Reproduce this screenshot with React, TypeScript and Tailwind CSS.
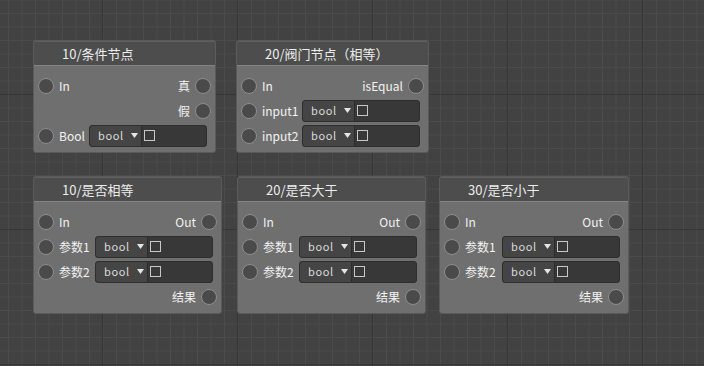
import React from "react";

type Row = { l?: string; r?: string; input?: boolean };
type NodeDef = { x: number; y: number; w: number; title: string; rows: Row[] };

const nodes: NodeDef[] = [
  { x: 33, y: 40, w: 183, title: "10/条件节点", rows: [{ l: "In", r: "真" }, { r: "假" }, { l: "Bool", input: true }] },
  { x: 236, y: 40, w: 193, title: "20/阀门节点（相等）", rows: [{ l: "In", r: "isEqual" }, { l: "input1", input: true }, { l: "input2", input: true }] },
  { x: 33, y: 176, w: 189, title: "10/是否相等", rows: [{ l: "In", r: "Out" }, { l: "参数1", input: true }, { l: "参数2", input: true }, { r: "结果" }] },
  { x: 237, y: 176, w: 189, title: "20/是否大于", rows: [{ l: "In", r: "Out" }, { l: "参数1", input: true }, { l: "参数2", input: true }, { r: "结果" }] },
  { x: 439, y: 176, w: 190, title: "30/是否小于", rows: [{ l: "In", r: "Out" }, { l: "参数1", input: true }, { l: "参数2", input: true }, { r: "结果" }] },
];

const FONT = "font-['Microsoft_YaHei','Noto_Sans_CJK_SC',sans-serif]";

function Pin() {
  return <div className="w-[16px] h-[16px] rounded-full bg-[#4a4a4a] border-[1.5px] border-[#8e8e8e] shrink-0" />;
}

function BoolInput() {
  return (
    <div className="ml-auto mr-[8px] w-[118px] h-[22px] rounded-[3px] bg-[#383838] border border-[#2e2e2e] flex items-center">
      <div className="w-[52px] h-full rounded-l-[3px] bg-[#454545] border-r border-[#2c2c2c] flex items-center pl-[8px] gap-[7px]">
        <span className="text-[11px] tracking-[0.6px] text-[#dcdcdc] leading-none">bool</span>
        <svg width="7" height="5" viewBox="0 0 7 5" className="shrink-0">
          <path d="M0 0 L7 0 L3.5 5 Z" fill="#e6e6e6" />
        </svg>
      </div>
      <div className="ml-[2px] w-[11px] h-[11px] border border-[#c8c8c8]" />
    </div>
  );
}

function Node({ n }: { n: NodeDef }) {
  return (
    <div
      className={`absolute rounded-[3px] bg-[#6f6f6f] border border-[#5a5a5a] overflow-hidden ${FONT}`}
      style={{ left: n.x, top: n.y, width: n.w }}
    >
      <div className="h-[25px] bg-[#4d4d4d] border-t border-[#5e5e5e] border-b border-b-[#858585] flex items-center pl-[28px] text-[13px] text-[#ececec]">
        {n.title}
      </div>
      <div className="pt-[7px] pb-[4px]">
        {n.rows.map((r, i) => (
          <div key={i} className="h-[25px] flex items-center text-[12px] text-[#f2f2f2]">
            {r.l !== undefined && (
              <div className="flex items-center ml-[4px] gap-[5px]">
                <Pin />
                <span>{r.l}</span>
              </div>
            )}
            {r.input && <BoolInput />}
            {r.r !== undefined && (
              <div className="flex items-center ml-auto mr-[4px] gap-[5px]">
                <span>{r.r}</span>
                <Pin />
              </div>
            )}
          </div>
        ))}
      </div>
    </div>
  );
}

export default function App() {
  return (
    <div className="relative w-[704px] h-[366px] overflow-hidden bg-[#424242] bg-[linear-gradient(to_right,#363636_1px,transparent_1px),linear-gradient(to_bottom,#363636_1px,transparent_1px),linear-gradient(to_right,#4b4b4b_1px,transparent_1px),linear-gradient(to_bottom,#4b4b4b_1px,transparent_1px)] [background-size:135px_135px,135px_135px,13.5px_13.5px,13.5px_13.5px] [background-position:102px_0,0_94px,8px_0,0_13px]">
      {nodes.map((n, i) => (
        <Node key={i} n={n} />
      ))}
    </div>
  );
}
